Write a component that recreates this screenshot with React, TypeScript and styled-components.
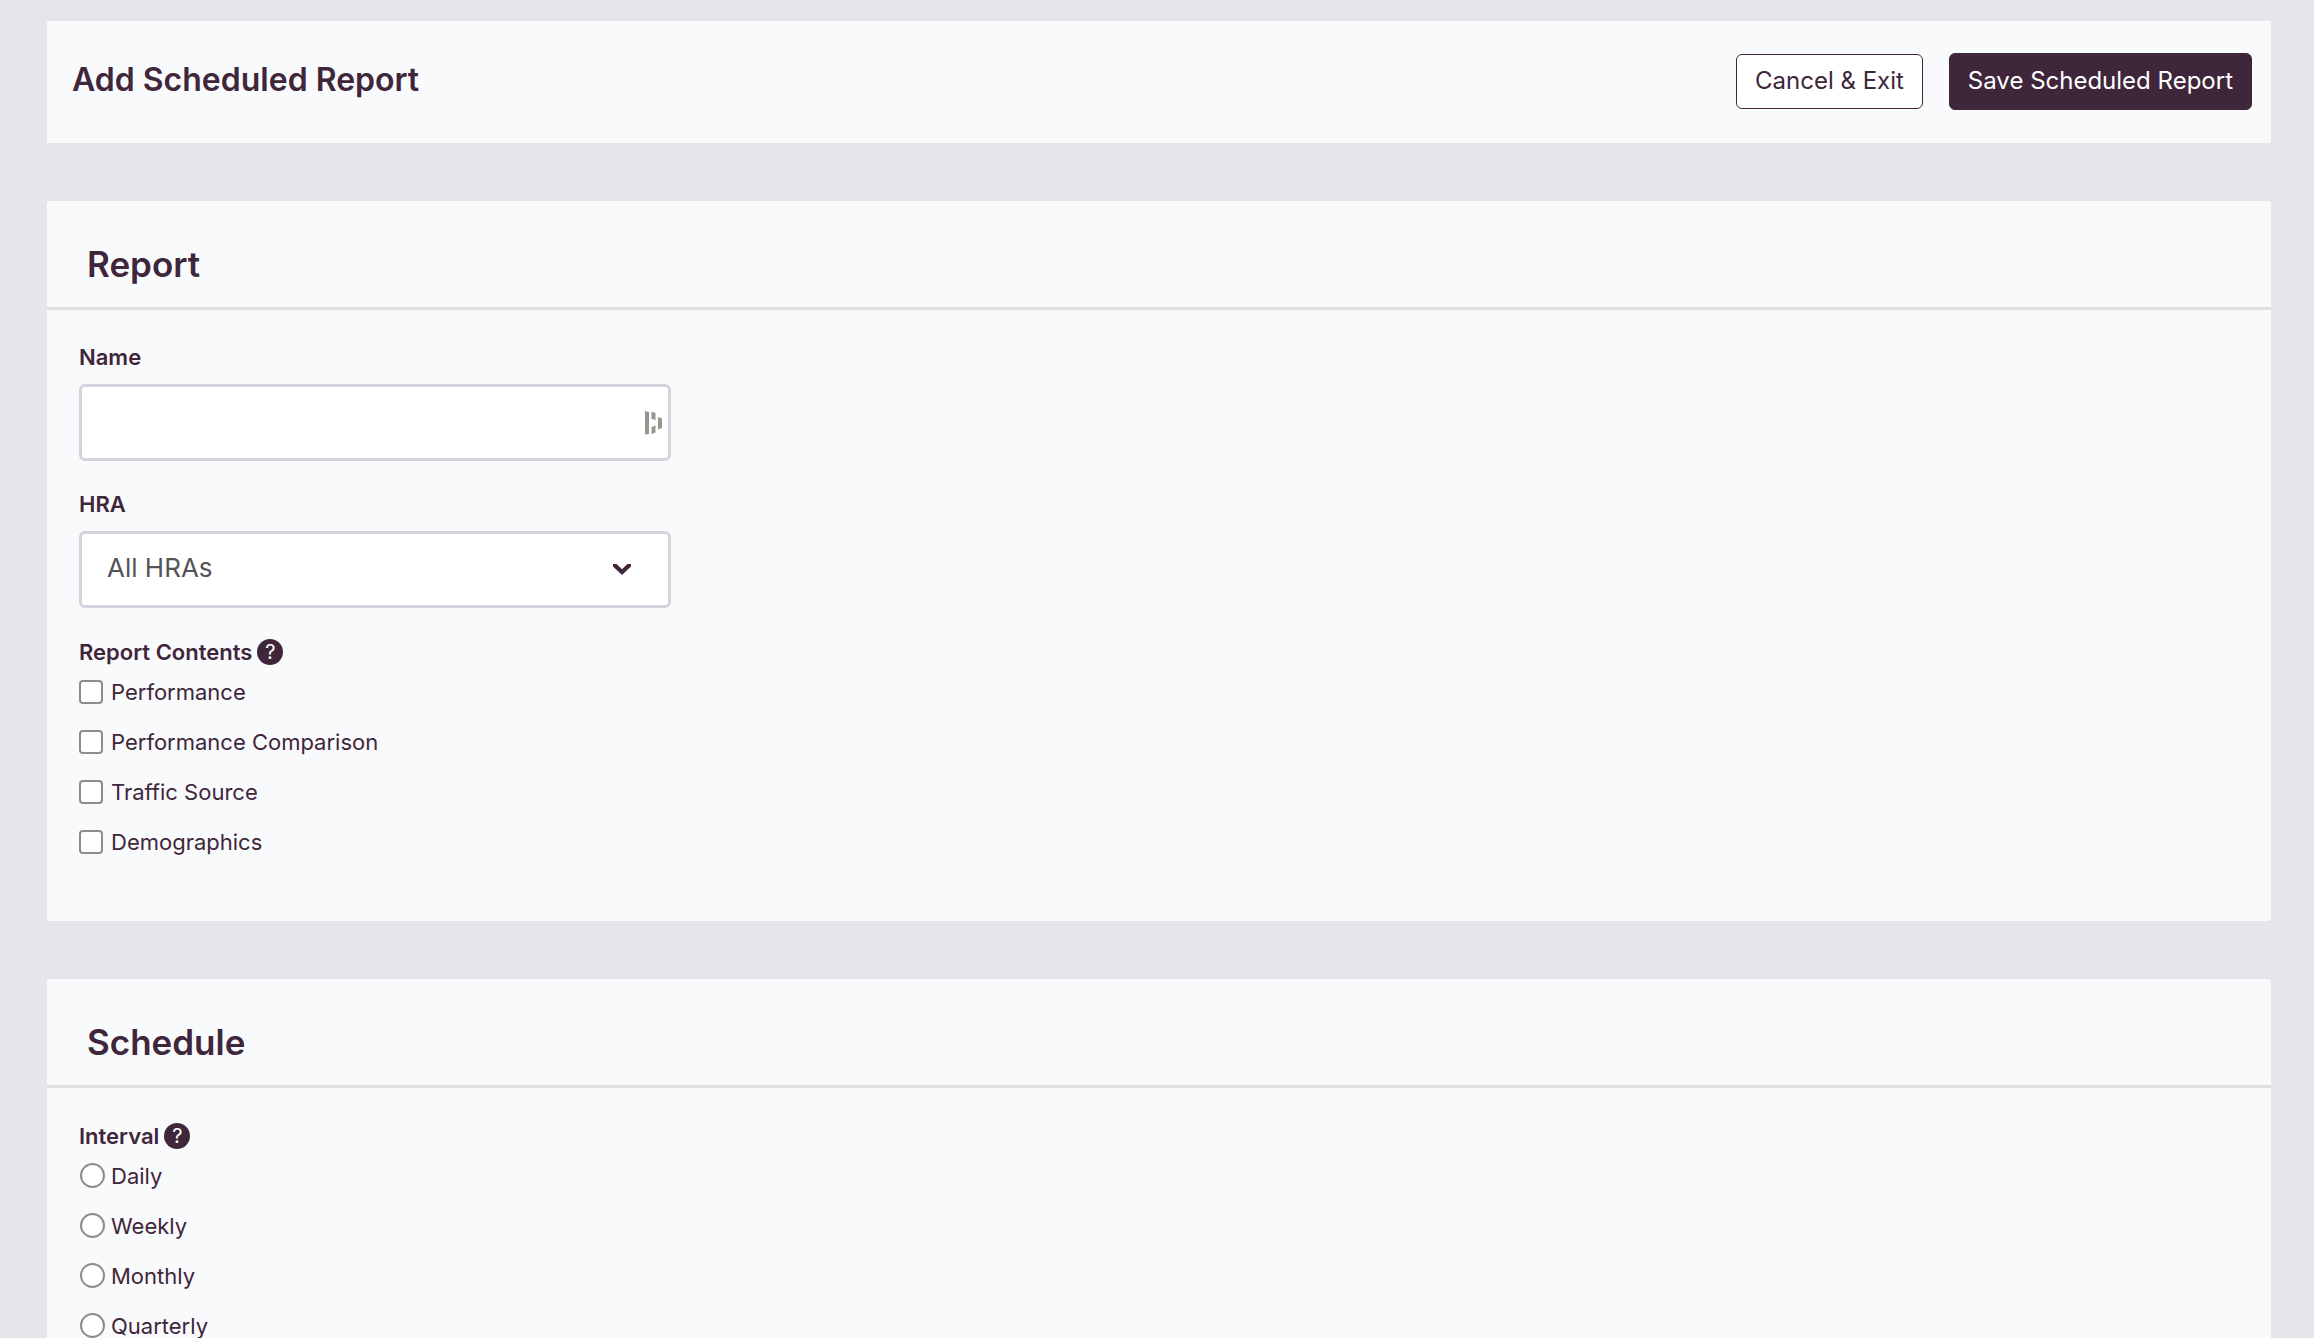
import React from "react";
import styled, { createGlobalStyle } from "styled-components";

const plum = "#40263a";

const GlobalStyle = createGlobalStyle`
  *, *::before, *::after { box-sizing: border-box; }
  body {
    margin: 0;
    background: #e5e6ea;
    color: ${plum};
    font-family: Inter, "Liberation Sans", sans-serif;
    font-size: 22px;
  }
  button, input, select { font-family: inherit; color: inherit; }
`;

const Page = styled.main`
  height: 100vh;
  overflow-y: auto;
  scrollbar-width: none;
  padding: 21px 43px 0 47px;
`;

const Form = styled.form`
  display: flex;
  flex-direction: column;
  gap: 58px;
`;

const TopBar = styled.header`
  display: flex;
  align-items: flex-start;
  justify-content: space-between;
  padding: 32px 19px 33px 25px;
  background: #f9fafc;
`;

const PageTitle = styled.h1`
  margin: 0;
  font-size: 32px;
  font-weight: 600;
  line-height: 54px;
`;

const Actions = styled.div`
  display: flex;
  align-items: center;
  gap: 26px;
`;

const Button = styled.button<{ $primary?: boolean }>`
  height: ${(p) => (p.$primary ? 57 : 55)}px;
  padding: 0 18px 2px;
  border: 1px solid ${plum};
  border-radius: 6px;
  background: ${(p) => (p.$primary ? plum : "#fff")};
  color: ${(p) => (p.$primary ? "#fff" : plum)};
  font-size: 24px;
  line-height: 28px;
  cursor: pointer;
`;

const Panel = styled.section`
  background: #f9fafc;
  border-radius: 3px;
`;

const PanelHeader = styled.div`
  padding: 43px 40px 23px;
  border-bottom: 3px solid #dedfe1;
`;

const PanelTitle = styled.h2`
  margin: 0;
  font-size: 35px;
  font-weight: 600;
  line-height: 40px;
`;

const PanelBody = styled.div`
  display: flex;
  flex-direction: column;
  gap: 29px;
  padding: 33px 32px 66px;
`;

const Field = styled.div`
  display: flex;
  flex-direction: column;
  gap: 13px;
  max-width: 592px;
`;

const Label = styled.label`
  font-weight: 600;
  line-height: 28px;
`;

const Control = styled.div`
  position: relative;
`;

const TextInput = styled.input`
  display: block;
  width: 100%;
  height: 77px;
  padding: 0 48px 0 26px;
  border: 3px solid #d1d4db;
  border-radius: 6px;
  background: #fff;
  font-size: 26px;
`;

const Select = styled.select`
  display: block;
  width: 100%;
  height: 77px;
  padding: 0 60px 4px 25px;
  border: 3px solid #d1d4db;
  border-radius: 6px;
  background: #fff;
  color: #555;
  font-size: 26px;
  appearance: none;
`;

const ControlIcon = styled.svg<{ $right: number }>`
  position: absolute;
  top: 0;
  bottom: 0;
  right: ${(p) => p.$right}px;
  margin: auto 0;
  pointer-events: none;
`;

const Group = styled.fieldset`
  min-width: 0;
  margin: 0;
  padding: 0;
  border: 0;
`;

const Legend = styled.legend`
  display: flex;
  align-items: center;
  gap: 5px;
  margin-bottom: 12px;
  padding: 0;
  font-weight: 600;
  line-height: 30px;
`;

const Help = styled.button`
  display: grid;
  place-items: center;
  width: 26px;
  height: 26px;
  padding: 0;
  border: 0;
  border-radius: 50%;
  background: ${plum};
  color: #fff;
  font-size: 20px;
  font-weight: 400;
  line-height: 26px;
`;

const Options = styled.div`
  display: flex;
  flex-direction: column;
  align-items: flex-start;
  gap: 24px;
`;

const Option = styled.label`
  display: grid;
  grid-template-columns: 26px auto;
  column-gap: 6px;
  line-height: 26px;
`;

const Checkbox = styled.input`
  align-self: center;
  width: 24px;
  height: 24px;
  margin: 0;
  border: 2px solid #8c8c8c;
  border-radius: 4px;
  background: #fff;
  appearance: none;
  &:checked { background: ${plum}; }
`;

const Radio = styled.input`
  justify-self: end;
  width: 25px;
  height: 25px;
  margin: 0;
  border: 2px solid #8c8c8c;
  border-radius: 50%;
  background: #fff;
  appearance: none;
  &:checked { border: 7px solid ${plum}; }
`;

const contents = ["Performance", "Performance Comparison", "Traffic Source", "Demographics"];
const intervals = ["Daily", "Weekly", "Monthly", "Quarterly"];

export default function App() {
  return (
    <>
      <GlobalStyle />
      <Page>
        <Form onSubmit={(e) => e.preventDefault()}>
          <TopBar>
            <PageTitle>Add Scheduled Report</PageTitle>
            <Actions>
              <Button type="button">Cancel &amp; Exit</Button>
              <Button type="submit" $primary>Save Scheduled Report</Button>
            </Actions>
          </TopBar>

          <Panel>
            <PanelHeader><PanelTitle>Report</PanelTitle></PanelHeader>
            <PanelBody>
              <Field>
                <Label htmlFor="name">Name</Label>
                <Control>
                  <TextInput id="name" type="text" />
                  <ControlIcon $right={9} width="17" height="24" viewBox="0 0 17 24" fill="#979590" aria-hidden="true">
                    <path d="M0 0 4 1V23L0 23.5ZM6.5 .5 10.500 2V9L6.500 8ZM6.500 16 10.500 14.500V21.500L6.500 23ZM13 6 17 7.500V17L13 18.500Z" />
                  </ControlIcon>
                </Control>
              </Field>
              <Field>
                <Label htmlFor="hra">HRA</Label>
                <Control>
                  <Select id="hra"><option>All HRAs</option></Select>
                  <ControlIcon $right={40} width="18" height="11" viewBox="0 0 18 11" fill={plum} aria-hidden="true">
                    <path d="M0 0H3.500L9 5.200 14.500 0H18V2.600L9 11 0 2.600Z" />
                  </ControlIcon>
                </Control>
              </Field>
              <Group>
                <Legend>Report Contents<Help type="button">?</Help></Legend>
                <Options>
                  {contents.map((c) => (
                    <Option key={c}><Checkbox type="checkbox" name="contents" value={c} />{c}</Option>
                  ))}
                </Options>
              </Group>
            </PanelBody>
          </Panel>

          <Panel>
            <PanelHeader><PanelTitle>Schedule</PanelTitle></PanelHeader>
            <PanelBody>
              <Group>
                <Legend>Interval<Help type="button">?</Help></Legend>
                <Options>
                  {intervals.map((i) => (
                    <Option key={i}><Radio type="radio" name="interval" value={i} />{i}</Option>
                  ))}
                </Options>
              </Group>
            </PanelBody>
          </Panel>
        </Form>
      </Page>
    </>
  );
}
